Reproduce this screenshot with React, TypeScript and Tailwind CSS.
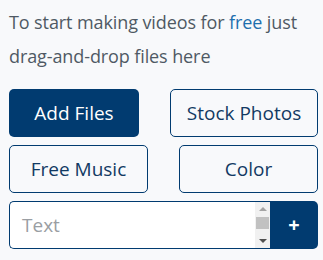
import React from 'react';

const font = { fontFamily: '"Open Sans", "Noto Sans", sans-serif' };

function OutlineButton({ label, width }: { label: string; width: string }) {
  return (
    <button
      className={`${width} h-12 rounded-[5px] border border-[#013b70] bg-[#f8f9fb] text-[19px] text-[#123a63]`}
    >
      {label}
    </button>
  );
}

export default function App() {
  return (
    <div className="w-[323px] h-[260px] bg-[#f8f9fb] px-[9px] pt-[5px]" style={font}>
      {/* Intro */}
      <p className="text-[18px] leading-[34px] text-[#4f5964] tracking-[-0.1px]">
        To start making videos for <span className="text-[#1e6fae]">free</span> just
        drag-and-drop files here
      </p>

      {/* Actions */}
      <div className="mt-[16px] flex flex-col gap-2 w-[309px]">
        <div className="flex justify-between">
          <button className="w-[130px] h-12 rounded-[5px] bg-[#013b70] text-[19px] text-white">
            Add Files
          </button>
          <OutlineButton label="Stock Photos" width="w-[148px]" />
        </div>
        <div className="flex justify-between">
          <OutlineButton label="Free Music" width="w-[139px]" />
          <OutlineButton label="Color" width="w-[139px]" />
        </div>

        {/* Text input */}
        <div className="flex h-12">
          <div className="flex-1 flex rounded-l-[5px] border border-r-0 border-[#013b70] bg-white overflow-hidden">
            <div className="flex-1 flex items-center pl-[12px] text-[19px] text-[#9a9ea3]">Text</div>
            <div className="w-[15px] bg-[#f1f1f1] flex flex-col items-center py-[5px]">
              <div className="w-0 h-0 border-l-[4px] border-r-[4px] border-b-[4px] border-l-transparent border-r-transparent border-b-[#a3a3a3]" />
              <div className="mt-[6px] w-[13px] h-[12px] bg-[#c1c1c1]" />
              <div className="mt-auto w-0 h-0 border-l-[4px] border-r-[4px] border-t-[4px] border-l-transparent border-r-transparent border-t-[#505050]" />
            </div>
          </div>
          <button className="w-[48px] rounded-r-[5px] bg-[#013b70] text-white text-[20px] font-bold leading-none">
            +
          </button>
        </div>
      </div>
    </div>
  );
}
